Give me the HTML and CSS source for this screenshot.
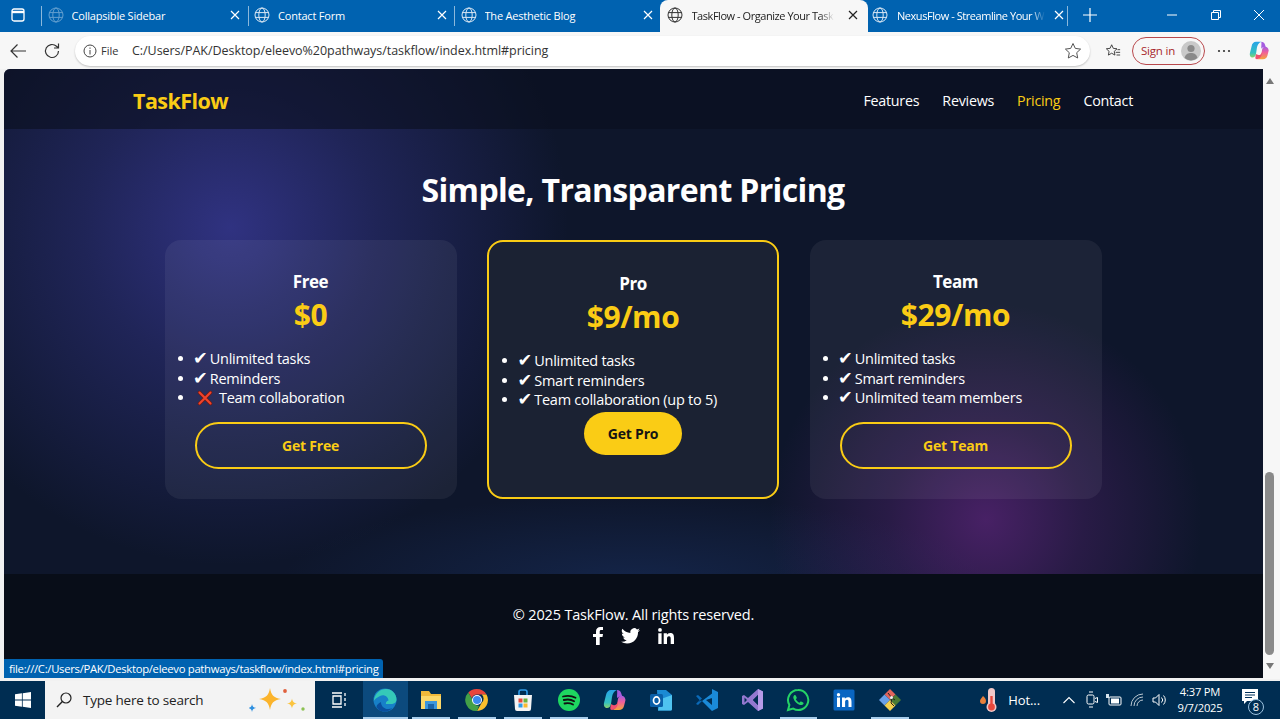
FILE: index.html
```html
<!DOCTYPE html>
<html lang="en">
<head>
<meta charset="utf-8">
<title>TaskFlow - Organize Your Tasks</title>
<link rel="stylesheet" href="styles.css">
</head>
<body>
<svg class="defs" width="0" height="0" aria-hidden="true">
  <symbol id="globe" viewBox="0 0 16 16"><g fill="none" stroke="currentColor" stroke-width="1"><circle cx="8" cy="8" r="7"/><ellipse cx="8" cy="8" rx="3.2" ry="7"/><path d="M1.2 5.6h13.6M1.2 10.4h13.6"/></g></symbol>
  <symbol id="close" viewBox="0 0 10 10"><path d="M1 1l8 8M9 1l-8 8" fill="none" stroke="currentColor" stroke-width="1.2"/></symbol>
  <linearGradient id="cpBlue" x1="0" y1="0" x2="0" y2="1"><stop offset="0" stop-color="#27a4e8"/><stop offset=".7" stop-color="#35c0c0"/><stop offset="1" stop-color="#8bd46a"/></linearGradient>
  <linearGradient id="cpWarm" x1="0" y1="0" x2="0" y2="1"><stop offset="0" stop-color="#a45ce0"/><stop offset=".45" stop-color="#f0609a"/><stop offset="1" stop-color="#f5a63a"/></linearGradient>
  <symbol id="copilotmark" viewBox="0 0 24 24">
    <path d="M8 2h6c-3 1-4.500 4-5 7l-1 7c-.4 2.500-2 4-4 4-2.500 0-3.500-2.500-3-5L3 7c.5-3 2.500-5 5-5z" fill="url(#cpBlue)"/>
    <path d="M14 2c2 0 3.600 1.200 4.200 3.200L19.500 9c-1.500-1-4-.8-5.500 1C14 7 14.500 4 14 2z" fill="#a45ce0"/>
    <path d="M16 8.500c3-1.500 6-.5 6.500 3.500L21 18c-.6 2.500-2.500 4-5 4H9.500c3-1 4.500-4 5-7.500.2-2.500.5-4.500 1.500-6z" fill="url(#cpWarm)"/>
    <path d="M8.500 16c2 2 5 1.500 6-1.500l.5-1c0 3-.5 5-2 6.500-1.500 1.500-4 2.500-5.500 1.500-.5-1.500 0-4 1-5.500z" fill="#f0506e"/>
  </symbol>
</svg>

<header class="tabstrip">
  <div class="winbtn"><svg width="14" height="14" viewBox="0 0 14 14"><rect x="1" y="1" width="12" height="12" rx="2" fill="none" stroke="#fff" stroke-width="1.3"/><path d="M1 4h12" stroke="#fff" stroke-width="2.4"/></svg></div>
  <div class="tab"><svg class="tabglobe faint"><use href="#globe"/></svg><span class="tabtitle">Collapsible Sidebar</span><svg class="tabx"><use href="#close"/></svg></div>
  <div class="tab"><svg class="tabglobe"><use href="#globe"/></svg><span class="tabtitle">Contact Form</span><svg class="tabx"><use href="#close"/></svg></div>
  <div class="tab"><svg class="tabglobe"><use href="#globe"/></svg><span class="tabtitle">The Aesthetic Blog</span><svg class="tabx"><use href="#close"/></svg></div>
  <div class="tab active"><svg class="tabglobe"><use href="#globe"/></svg><span class="tabtitle fade">TaskFlow - Organize Your Task</span><svg class="tabx"><use href="#close"/></svg></div>
  <div class="tab after"><svg class="tabglobe"><use href="#globe"/></svg><span class="tabtitle fade">NexusFlow - Streamline Your W</span><svg class="tabx"><use href="#close"/></svg></div>
  <div class="newtab"><svg width="14" height="14" viewBox="0 0 14 14"><path d="M7 0v14M0 7h14" stroke="#fff" stroke-width="1.2"/></svg></div>
  <div class="wincontrols">
    <svg width="10" height="10" viewBox="0 0 10 10"><path d="M0 5h10" stroke="#fff"/></svg>
    <svg width="10" height="10" viewBox="0 0 10 10"><path d="M.5 2.5h7v7h-7zM2.5 2.5V.5h7v7h-2" fill="none" stroke="#fff"/></svg>
    <svg width="10" height="10" viewBox="0 0 10 10"><path d="M0 0l10 10M10 0L0 10" stroke="#fff"/></svg>
  </div>
</header>

<nav class="toolbar">
  <svg class="toolicon" viewBox="0 0 18 18"><path d="M17 9H2M8.500 2.500L2 9l6.500 6.500" fill="none" stroke="#333" stroke-width="1.200"/></svg>
  <svg class="toolicon reload" viewBox="0 0 18 18"><path d="M15.500 9a6.500 6.500 0 1 1-2-4.700L15.500 6M15.500 1.500V6H11" fill="none" stroke="#333" stroke-width="1.200"/></svg>
  <div class="address">
    <svg class="info" viewBox="0 0 14 14"><circle cx="7" cy="7" r="6" fill="none" stroke="#444"/><path d="M7 6v4.500M7 3.500v1.300" stroke="#444"/></svg>
    <span class="filelabel">File</span>
    <span class="url">C:/Users/PAK/Desktop/eleevo%20pathways/taskflow/index.html#pricing</span>
    <svg class="star" viewBox="0 0 18 18"><path d="M9 1.500l2.300 4.900 5.300.7-3.900 3.600 1 5.300L9 13.400 4.300 16l1-5.300L1.400 7.100l5.300-.7z" fill="none" stroke="#555"/></svg>
  </div>
  <svg class="favs" viewBox="0 0 18 18"><path d="M7.500 2l1.800 4 4.200.5-3.100 2.900.8 4.200-3.700-2.100-3.700 2.100.8-4.200L1.500 6.500 5.700 6zM12 10.500h5M13 13.500h4M14 7.500h3" fill="none" stroke="#333"/></svg>
  <div class="signin"><span>Sign in</span><span class="avatar"><svg width="20" height="20" viewBox="0 0 20 20"><circle cx="10" cy="10" r="10" fill="#c9c9c9"/><circle cx="10" cy="7.500" r="3.600" fill="#8a8a8a"/><path d="M3.500 17c1-4 3.500-5 6.500-5s5.500 1 6.500 5a10 10 0 0 1-13 0z" fill="#8a8a8a"/></svg></span></div>
  <svg class="dots" viewBox="0 0 14 4"><circle cx="2" cy="2" r="1.100" fill="#333"/><circle cx="7" cy="2" r="1.100" fill="#333"/><circle cx="12" cy="2" r="1.100" fill="#333"/></svg>
  <svg class="copilot"><use href="#copilotmark"/></svg>
</nav>

<div class="browserbody">
  <main class="page">
    <div class="pagenav">
      <a class="logo">TaskFlow</a>
      <div class="navlinks"><a>Features</a><a>Reviews</a><a class="current">Pricing</a><a>Contact</a></div>
    </div>
    <section class="pricing">
      <h2>Simple, Transparent Pricing</h2>
      <div class="cards">
        <article class="card">
          <h3>Free</h3>
          <p class="price">$0</p>
          <ul>
            <li><span class="tick">✔</span> Unlimited tasks</li>
            <li><span class="tick">✔</span> Reminders</li>
            <li><svg class="cross" viewBox="0 0 16 16"><path d="M2.500 2.500l11 11M13.500 2.500l-11 11" stroke="#7a1a10" stroke-width="3.400" stroke-linecap="round"/><path d="M2.500 2.500l11 11M13.500 2.500l-11 11" stroke="#f0442c" stroke-width="2" stroke-linecap="round"/></svg> Team collaboration</li>
          </ul>
          <a class="btn outline">Get Free</a>
        </article>
        <article class="card featured">
          <h3>Pro</h3>
          <p class="price">$9/mo</p>
          <ul>
            <li><span class="tick">✔</span> Unlimited tasks</li>
            <li><span class="tick">✔</span> Smart reminders</li>
            <li><span class="tick">✔</span> Team collaboration (up to 5)</li>
          </ul>
          <a class="btn solid">Get Pro</a>
        </article>
        <article class="card">
          <h3>Team</h3>
          <p class="price">$29/mo</p>
          <ul>
            <li><span class="tick">✔</span> Unlimited tasks</li>
            <li><span class="tick">✔</span> Smart reminders</li>
            <li><span class="tick">✔</span> Unlimited team members</li>
          </ul>
          <a class="btn outline">Get Team</a>
        </article>
      </div>
    </section>
    <footer class="pagefoot">
      <p>© 2025 TaskFlow. All rights reserved.</p>
      <div class="social">
        <svg width="13" height="18" viewBox="0 0 13 18"><path d="M4 18V10H1V7h3V4.500C4 1.500 5.800 0 8.400 0H11v3H9.300C8 3 7.700 3.600 7.700 4.700V7H11l-.5 3H7.700v8z" fill="#fff"/></svg>
        <svg class="bird" width="19" height="16" viewBox="0 0 20 17"><path d="M20 2c-.7.400-1.500.600-2.300.700.800-.500 1.500-1.300 1.800-2.200-.8.500-1.700.800-2.600 1A4.100 4.100 0 0 0 9.900 5.200 11.600 11.600 0 0 1 1.400.9a4.100 4.100 0 0 0 1.300 5.500c-.7 0-1.300-.2-1.900-.5 0 2 1.400 3.700 3.300 4.100-.6.200-1.200.2-1.900.1.500 1.600 2 2.800 3.800 2.800A8.200 8.200 0 0 1 0 14.600 11.600 11.600 0 0 0 6.300 16.500c7.500 0 11.700-6.300 11.700-11.800v-.5c.8-.6 1.500-1.300 2-2.200z" fill="#fff"/></svg>
        <svg width="16" height="16" viewBox="0 0 16 16"><path d="M.3 5.300h3.300V16H.3zM2 0a1.900 1.900 0 1 1 0 3.800A1.900 1.900 0 0 1 2 0zM5.700 5.300h3.200v1.500c.5-.9 1.600-1.800 3.300-1.800 3.400 0 3.800 2.200 3.800 5.100V16h-3.300v-5c0-1.200 0-2.800-1.700-2.800s-2 1.300-2 2.700V16H5.700z" fill="#fff"/></svg>
      </div>
    </footer>
    <div class="statuslink">file:///C:/Users/PAK/Desktop/eleevo pathways/taskflow/index.html#pricing</div>
  </main>
  <aside class="scrollbar">
    <span class="arrow up"></span>
    <span class="track"><span class="thumb"></span></span>
    <span class="arrow down"></span>
  </aside>
</div>

<footer class="taskbar">
  <div class="startbtn"><svg width="16" height="16" viewBox="0 0 16 16"><path d="M0 2.300L6.900 1.300v6.300H0zM7.700 1.200L16 0v7.600H7.700zM0 8.400h6.900v6.300L0 13.700zM7.700 8.400H16V16l-8.300-1.200z" fill="#fff"/></svg></div>
  <div class="searchbox">
    <svg width="16" height="16" viewBox="0 0 16 16"><circle cx="10" cy="6" r="5" fill="none" stroke="#222" stroke-width="1.200"/><path d="M6.400 9.600L1 15" stroke="#222" stroke-width="1.400"/></svg>
    <span>Type here to search</span>
    <svg class="sparkle" width="58" height="28" viewBox="0 0 58 28"><path d="M21 2c1.200 7 3.500 9.800 11 11-7.500 1.200-9.800 4-11 11-1.200-7-3.500-9.800-11-11 7.500-1.200 9.800-4 11-11z" fill="#fbb42c"/><path d="M43 12.500c.6 3.300 1.700 4.400 5 5-3.300.6-4.400 1.700-5 5-.6-3.300-1.700-4.400-5-5 3.300-.6 4.400-1.700 5-5z" fill="#fbc43f"/><path d="M3 18c.4 2.500 1.300 3.400 4 4-2.700.6-3.600 1.500-4 4-.4-2.500-1.300-3.400-4-4 2.700-.6 3.600-1.500 4-4z" fill="#2d8fe0"/><circle cx="36" cy="5" r="1.900" fill="#e0603c"/><circle cx="54" cy="23" r="1.700" fill="#8cc152"/></svg>
  </div>
  <div class="taskview"><svg width="16" height="16" viewBox="0 0 16 16"><path d="M1 1h10M1 15h10M2 4h8v8H2zM14 1v3M14 6v3M14 11v3" fill="none" stroke="#fff" stroke-width="1.300"/></svg></div>
  <div class="apps">
    <div class="app open focus"><svg viewBox="0 0 24 24"><circle cx="12" cy="12" r="11.500" fill="#1780c8"/><path d="M.8 13C1.500 5.500 7 1 13 1c6 0 10.500 5 10.500 10.500 0 3-2.500 4.500-5.500 4.500h-5c-.5-1.500.5-3 2.500-3.500C15 8.500 11 6 7 8 4 9.500 2 11 .8 13z" fill="#35c9b8"/><path d="M8 14c0 5 5 9 11.500 6-4.500 5-13 5-16-1 0-2 2-4 4.500-5z" fill="#0a4f9e"/></svg></div>
    <div class="app open"><svg viewBox="0 0 24 24"><path d="M2 3h8l2 3h10v15H2z" fill="#f0b93a"/><path d="M2 8h20v13H2z" fill="#fcd869"/><path d="M6 13h12v8H6z" fill="#3c96dc"/><path d="M9 16h6v5H9z" fill="#1a62a8"/></svg></div>
    <div class="app open"><svg viewBox="0 0 24 24"><path d="M12 1a11 11 0 0 1 9.500 5.500H12a5.500 5.500 0 0 0-5.200 3.700L3.300 4.500A11 11 0 0 1 12 1z" fill="#e8453c"/><path d="M21.500 6.500A11 11 0 0 1 12 23l4.700-8.200a5.500 5.500 0 0 0 0-8.300z" fill="#fbc02d"/><path d="M12 23A11 11 0 0 1 3.300 4.500l4.800 8.200a5.500 5.500 0 0 0 6 4.900z" fill="#43a047"/><circle cx="12" cy="12" r="5" fill="#fff"/><circle cx="12" cy="12" r="4" fill="#3b8af0"/></svg></div>
    <div class="app open"><svg viewBox="0 0 24 24"><path d="M3 7h18l-1 14a2 2 0 0 1-2 2H6a2 2 0 0 1-2-2z" fill="#f4f4f4"/><path d="M8 7V4a2 2 0 0 1 2-2h4a2 2 0 0 1 2 2v3" fill="none" stroke="#2f9be8" stroke-width="1.600"/><path d="M7.500 10.500h4v4h-4z" fill="#e8483c"/><path d="M12.500 10.500h4v4h-4z" fill="#6cb33f"/><path d="M7.500 15.500h4v4h-4z" fill="#2f9be8"/><path d="M12.500 15.500h4v4h-4z" fill="#fbb92f"/></svg></div>
    <div class="app open"><svg viewBox="0 0 24 24"><circle cx="12" cy="12" r="11" fill="#1ed760"/><path d="M6 8.500c4-1 9-.7 12.500 1.300M6.800 12c3.500-.8 7.500-.5 10.300 1.200M7.500 15.500c3-.6 6-.4 8.500 1" fill="none" stroke="#111" stroke-width="1.800" stroke-linecap="round"/></svg></div>
    <div class="app"><svg><use href="#copilotmark"/></svg></div>
    <div class="app"><svg viewBox="0 0 24 24"><path d="M8 2h9l6 5v14a1.500 1.500 0 0 1-1.500 1.500H9z" fill="#1b8ad4"/><path d="M12 11l11-4v14a1.500 1.500 0 0 1-1.500 1.500H9z" fill="#4fc3f0"/><rect x="1" y="6" width="13" height="13" rx="1.500" fill="#0a5fa8"/><ellipse cx="7.500" cy="12.500" rx="3" ry="3.600" fill="none" stroke="#fff" stroke-width="1.700"/></svg></div>
    <div class="app"><svg viewBox="0 0 24 24"><path d="M17 1l6 3v16l-6 3-10-10 10-7.500v4.500L11 12l6 5z" fill="#1a8ad8"/><path d="M1 8l2-1 4 3.500L3 14l3-1.500L7 13 3 17l-2-1 3.500-4z" fill="#0a6ab8"/></svg></div>
    <div class="app"><svg viewBox="0 0 24 24"><path d="M17 1l5 2.500v17L17 23 7 14l-4 3-2-1V8l2-1 4 3zM17 7l-5 5 5 5zM3.500 9.500v5l2.500-2.500z" fill="#9478d0"/><path d="M17 1l5 2.500v17L17 23z" fill="#b79be8"/><path d="M17 7l-5 5 5 5z" fill="#002d52"/></svg></div>
    <div class="app open"><svg viewBox="0 0 24 24"><path d="M12 2a10 10 0 0 0-8.600 15L2 22l5.200-1.400A10 10 0 1 0 12 2z" fill="none" stroke="#25d366" stroke-width="2"/><path d="M8.500 7c-1 .8-1.500 2-1 3.500 1 3 3.500 5.500 6.500 6.500 1.500.4 3-.2 3.500-1.300.2-.6 0-1-.4-1.200l-2-1c-.4-.1-.7 0-1 .4l-.6.800c-1.500-.6-3-2-3.700-3.500l.7-.7c.3-.3.300-.6.200-1l-.9-2c-.3-.5-.9-.7-1.300-.5z" fill="#25d366"/></svg></div>
    <div class="app"><svg viewBox="0 0 24 24"><rect x="1.500" y="1.500" width="21" height="21" rx="1.500" fill="#0a66c2"/><path d="M5 9.500h3v9.500H5zM6.500 5a1.700 1.700 0 1 1 0 3.400 1.700 1.700 0 0 1 0-3.400zM10 9.500h2.900v1.300c.5-.8 1.400-1.600 3-1.600 3 0 3.600 2 3.600 4.500V19h-3v-4.700c0-1.100 0-2.500-1.500-2.500s-1.900 1.200-1.900 2.400V19H10z" fill="#fff"/></svg></div>
    <div class="app open"><svg viewBox="0 0 24 24"><path d="M12 1l5.500 5.500L12 12 6.500 6.500z" fill="#e0645c"/><path d="M1 12l5.500-5.500L12 12l-5.500 5.500z" fill="#6aa0e8"/><path d="M12 12l5.500-5.500L23 12l-5.500 5.500z" fill="#4a7a34"/><path d="M12 23l-5.500-5.500L12 12l5.500 5.500z" fill="#f4d04f"/><path d="M10 5l4 5-1 5 3 3M14 10l3 2" fill="none" stroke="#222" stroke-width="1"/><circle cx="13.500" cy="9.500" r="1.500" fill="#eee"/></svg></div>
  </div>
  <div class="tray">
    <div class="weather"><svg width="18" height="26" viewBox="0 0 18 26"><path d="M3 9c2 2 3 3 3 5a3 3 0 0 1-6 0c0-2 2-3 3-5z" fill="#e8803c"/><rect x="8" y="1" width="7" height="18" rx="3.500" fill="#f2c8c8"/><circle cx="11.500" cy="20" r="5" fill="#f2c8c8"/><rect x="10.300" y="9" width="2.400" height="10" fill="#e8483c"/><circle cx="11.500" cy="20" r="3.400" fill="#e8483c"/></svg><span>Hot...</span></div>
    <svg class="trayicon chevron" width="12" height="8" viewBox="0 0 12 8"><path d="M.5 7L6 1.500 11.500 7" fill="none" stroke="#fff" stroke-width="1.100"/></svg>
    <svg class="trayicon" width="12" height="18" viewBox="0 0 12 18"><rect x="1" y="4" width="7" height="9" rx="1.500" fill="none" stroke="#fff"/><path d="M3 1h4M3 16h4M9 7.500l2.500-1v5L9 10.500" fill="none" stroke="#fff"/></svg>
    <svg class="trayicon" width="16" height="12" viewBox="0 0 16 12"><rect x="3" y="3" width="12" height="8" rx="1" fill="none" stroke="#fff"/><rect x="5" y="4.500" width="8" height="5" fill="#fff"/><path d="M0 0h3v4H0z" fill="#d8e4ee"/></svg>
    <svg class="trayicon" width="14" height="14" viewBox="0 0 14 14"><path d="M1 13a12 12 0 0 1 12-12M4 13a9 9 0 0 1 9-9M7 13a6 6 0 0 1 6-6" fill="none" stroke="#cfd8df" stroke-width=".9"/></svg>
    <svg class="trayicon" width="15" height="14" viewBox="0 0 15 14"><path d="M1 5h2.500L7 1.500v11L3.500 9H1zM9.500 4.500a3.500 3.500 0 0 1 0 5M11.500 2.500a6.500 6.500 0 0 1 0 9" fill="none" stroke="#fff"/></svg>
    <div class="clock"><span>4:37 PM</span><span>9/7/2025</span></div>
    <div class="notify"><svg width="16" height="16" viewBox="0 0 16 16"><path d="M0 0h16v12H5l-3 3v-3H0z" fill="#fff"/><path d="M3 3.500h10M3 6h10M3 8.500h7" stroke="#00305a"/></svg><span class="badge">8</span></div>
  </div>
</footer>
</body>
</html>
```

FILE: styles.css
```css
* { box-sizing: border-box; }
html, body { height: 100%; }
body {
  margin: 0;
  height: 719px;
  overflow: hidden;
  display: flex;
  flex-direction: column;
  background: #f1f1f1;
  font-family: "Open Sans", "Noto Sans", sans-serif;
}
.defs { position: absolute; }
p, h2, h3, ul { margin: 0; }

/* tab strip */
.tabstrip {
  height: 32px;
  flex: none;
  display: flex;
  align-items: stretch;
  background: #0062b0;
  color: #fff;
}
.winbtn { width: 37px; flex: none; display: flex; align-items: center; justify-content: center; padding-bottom: 2px; padding-right: 1px; }
.tab {
  width: 206.500px;
  flex: none;
  display: flex;
  align-items: center;
  padding: 0 2.500px 2px 5px;
  gap: 8px;
  font-size: 11px;
  letter-spacing: -.2px;
  position: relative;
}
.tab::before {
  content: "";
  position: absolute;
  left: 4px;
  top: 6px;
  bottom: 6px;
  width: 1px;
  background: rgba(255,255,255,.55);
}
.tabglobe { width: 16px; height: 16px; flex: none; color: #dbe8f4; margin-left: 5.500px; }
.tab.active {
  background: #f7f7f7;
  color: #222;
  border-radius: 8px 8px 0 0;
  width: 208px;
  margin-left: 3.500px;
  padding: 0 9px 2px 1px;
  gap: 9px;
}
.tab.after { width: 199px; padding: 0 2px 2px 0; gap: 9px; }
.tab.after .tabglobe { margin-left: 4px; }
.tab.active::before, .tab.after::before { display: none; }
.tab.active .tabglobe { color: #333; }
.tabglobe.faint { opacity: .45; }
.tabtitle { flex: 1; white-space: nowrap; overflow: hidden; min-width: 0; }
.tabtitle.fade { letter-spacing: -.45px; -webkit-mask-image: linear-gradient(to left, transparent 0, #000 14px); mask-image: linear-gradient(to left, transparent 0, #000 14px); }
.tabx { width: 10px; height: 10px; flex: none; margin: 0 1px 0 5px; }
.tab.after .tabx { margin-left: 0; }
.newtab {
  width: 46px;
  flex: none;
  display: flex;
  align-items: center;
  justify-content: center;
  position: relative;
  padding-bottom: 2px;
}
.newtab::before { content: ""; position: absolute; left: 0; top: 6px; bottom: 6px; width: 1px; background: rgba(255,255,255,.55); }
.wincontrols { margin-left: auto; width: 167px; flex: none; display: flex; align-items: center; justify-content: space-between; padding: 0 16px 2px 54px; }

/* toolbar */
.toolbar {
  height: 37px;
  flex: none;
  display: flex;
  align-items: center;
  background: #f7f7f7;
  padding: 0 10px 0 9px;
}
.toolicon { width: 18px; height: 18px; flex: none; }
.reload { margin-left: 16px; }
.address {
  margin-left: 14px;
  width: 1015px;
  height: 30px;
  flex: none;
  background: #fff;
  border-radius: 15px;
  box-shadow: 0 1px 2px rgba(0,0,0,.22);
  display: flex;
  align-items: center;
  padding: 0 8px 0 8px;
  font-size: 12px;
  color: #333;
}
.info { width: 14px; height: 14px; flex: none; }
.filelabel { margin-left: 4px; font-size: 11px; width: 31px; }
.url { font-size: 12.500px; letter-spacing: -.05px; color: #333; flex: 1; white-space: nowrap; }
.star { width: 18px; height: 18px; flex: none; }
.favs { width: 16px; height: 16px; flex: none; margin-left: 15px; }
.signin {
  margin-left: 11px;
  width: 73px;
  height: 28px;
  border: 1.500px solid #b9484c;
  border-radius: 14px;
  display: flex;
  align-items: center;
  justify-content: space-between;
  padding: 0 3px 0 8px;
  font-size: 11.500px;
  color: #a8282c;
  letter-spacing: -.2px;
}
.avatar { display: flex; }
.dots { width: 14px; height: 4px; flex: none; margin-left: 12px; }
.copilot { width: 21px; height: 21px; flex: none; margin-left: 18px; }

/* page */
.browserbody { height: 610px; flex: none; display: flex; padding-left: 4px; }
.page {
  width: 1259px;
  height: 609px;
  position: relative;
  overflow: hidden;
  display: flex;
  flex-direction: column;
  border-radius: 6px 0 0 0;
  color: #fff;
  background:
    radial-gradient(circle at 18% 26%, rgba(62,62,165,.7) 0, rgba(62,62,165,.36) 13%, rgba(62,62,165,0) 30%),
    radial-gradient(circle at 78% 74%, rgba(110,40,140,.6) 0, rgba(110,40,140,.28) 9%, rgba(110,40,140,0) 20%),
    radial-gradient(ellipse 28% 14% at 50% 84%, rgba(30,60,120,.38) 0, rgba(30,60,120,0) 100%),
    #0e162b;
}
.pagenav {
  height: 60px;
  flex: none;
  display: flex;
  align-items: center;
  justify-content: space-between;
  padding: 2px 130px 0 129px;
  background: rgba(10,15,30,.6);
}
.logo { font-size: 21.500px; font-weight: 700; color: #facc15; letter-spacing: -.55px; }
.navlinks { display: flex; gap: 23px; font-size: 14.300px; font-weight: 500; letter-spacing: -.25px; }
.current { color: #facc15; }

.pricing { height: 445px; flex: none; display: flex; flex-direction: column; align-items: center; padding: 39px 1px 0 0; }
h2 { font-size: 32px; line-height: 44px; font-weight: 700; letter-spacing: -.65px; }
.cards { margin-top: 28px; display: flex; gap: 30.500px; align-items: stretch; height: 259px; }
.card {
  width: 292px;
  padding: 30px 30px 0;
  border-radius: 16px;
  background: rgba(255,255,255,.06);
  text-align: center;
}
.card.featured { border: 2px solid #facc15; background: #1b2233; }
h3 { font-size: 17px; line-height: 24px; font-weight: 700; letter-spacing: -.4px; }
.price { font-size: 30px; line-height: 41px; font-weight: 700; color: #facc15; letter-spacing: -.4px; }
ul { padding: 0; margin-top: 14px; text-align: left; font-size: 14.500px; line-height: 19.600px; letter-spacing: -.27px; }
.tick { font-family: "DejaVu Sans", sans-serif; font-size: 17.500px; letter-spacing: -1.400px; line-height: 0; margin-left: -1.500px; }
.cross { width: 16px; height: 16px; vertical-align: -3px; margin: 0 3px 0 2px; }
.btn { display: block; font-size: 14px; font-weight: 700; border-radius: 24px; color: #facc15; letter-spacing: -.2px; }
.btn.outline { height: 47px; margin-top: 14px; border: 2px solid #facc15; line-height: 44px; }
.btn.solid { width: 98px; height: 43px; margin: 2px auto 0; line-height: 43px; background: #facc15; color: #141414; }

.pagefoot {
  flex: 1;
  background: #080d18;
  display: flex;
  flex-direction: column;
  align-items: center;
  padding-top: 31px;
  font-size: 14.500px;
  letter-spacing: -.17px;
  line-height: 20px;
}
.social { display: flex; align-items: center; gap: 16px; margin-top: 2px; padding-right: 2px; }
.bird { margin-right: 2px; }
.statuslink {
  position: absolute;
  left: 0;
  bottom: 0;
  width: 379px;
  height: 19px;
  padding-left: 5px;
  background: #0062b0;
  border-radius: 0 3px 0 0;
  font-size: 11.300px;
  line-height: 19px;
  letter-spacing: -.3px;
  white-space: nowrap;
}

/* scrollbar */
.scrollbar { width: 17px; flex: none; display: flex; flex-direction: column; align-items: center; padding: 9px 4px 10px 0; background: #f7f7f7; }
.arrow { width: 0; height: 0; border-left: 4px solid transparent; border-right: 4px solid transparent; flex: none; }
.arrow.up { border-bottom: 6px solid #777; }
.arrow.down { border-top: 6px solid #777; }
.track { flex: 1; width: 9px; display: flex; flex-direction: column; justify-content: flex-end; padding: 0 0 8px; }
.thumb { height: 183px; background: #8a8a8a; border-radius: 5px; }

/* taskbar */
.taskbar {
  height: 40px;
  flex: none;
  display: flex;
  align-items: stretch;
  background: #002d52;
  color: #fff;
  border-top: 2px solid #f1f1f1;
}
.startbtn { width: 45px; flex: none; display: flex; align-items: center; justify-content: center; }
.searchbox {
  width: 270px;
  flex: none;
  display: flex;
  align-items: center;
  padding: 0 8px 0 11px;
  gap: 11px;
  background: #f3f3f3;
  color: #222;
  font-size: 13.500px;
  letter-spacing: -.2px;
}
.sparkle { margin-left: auto; }
.taskview { width: 47.500px; flex: none; display: flex; align-items: center; justify-content: center; }
.apps { display: flex; gap: 0; flex: none; }
.app {
  width: 45.900px;
  flex: none;
  display: flex;
  align-items: center;
  justify-content: center;
  position: relative;
}
.app svg { width: 24px; height: 24px; }
.app.focus { background: #0c4a7d; }
.app.open::after {
  content: "";
  position: absolute;
  left: 4px;
  right: 4px;
  bottom: 0;
  height: 2px;
  background: #a8cdec;
}
.app.focus::after { left: 0; right: 0; }
.tray { margin-left: auto; display: flex; align-items: center; padding-right: 19px; gap: 8px; flex: none; }
.weather { display: flex; align-items: center; gap: 10px; font-size: 13px; letter-spacing: -.1px; margin-right: 15px; }
.trayicon { flex: none; }
.chevron { margin-right: 3px; }
.clock { display: flex; flex-direction: column; align-items: center; font-size: 11.200px; line-height: 16px; letter-spacing: -.2px; margin-left: 4px; width: 42px; white-space: nowrap; }
.notify { position: relative; width: 24px; height: 24px; margin-left: 8px; }
.notify svg { position: absolute; left: 5px; top: 1px; }
.badge {
  position: absolute;
  right: -3px;
  bottom: -3px;
  width: 16px;
  height: 16px;
  border-radius: 50%;
  border: 1px solid #9ec3e0;
  background: #002d52;
  font-size: 11px;
  line-height: 14px;
  text-align: center;
}
```
